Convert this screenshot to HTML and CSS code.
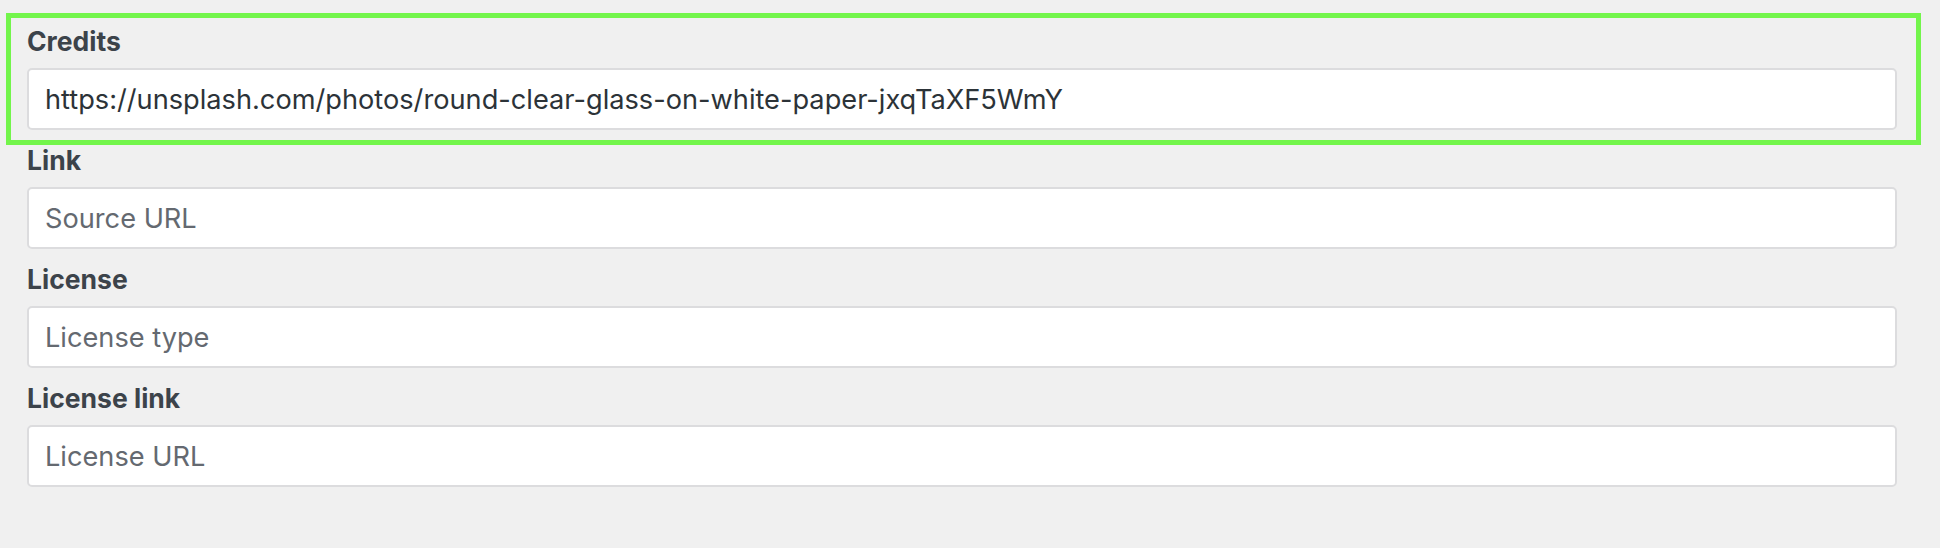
FILE: index.html
```html
<!DOCTYPE html>
<html lang="en">
<head>
<meta charset="utf-8">
<title>Credits</title>
<link rel="stylesheet" href="styles.css">
</head>
<body>
<div class="form">
  <div class="field field--active">
    <label class="field-label" for="credits">Credits</label>
    <input class="field-input" id="credits" type="text" value="https://unsplash.com/photos/round-clear-glass-on-white-paper-jxqTaXF5WmY">
  </div>
  <div class="field">
    <label class="field-label" for="link">Link</label>
    <input class="field-input" id="link" type="text" placeholder="Source URL">
  </div>
  <div class="field">
    <label class="field-label" for="license">License</label>
    <input class="field-input" id="license" type="text" placeholder="License type">
  </div>
  <div class="field">
    <label class="field-label" for="license-link">License link</label>
    <input class="field-input" id="license-link" type="text" placeholder="License URL">
  </div>
</div>
</body>
</html>
```
FILE: styles.css
```css
html, body {
  margin: 0;
  padding: 0;
  background: #f0f0f0;
}
body {
  font-family: Inter, "Noto Sans", sans-serif;
  height: 548px;
  overflow: hidden;
}
.form {
  padding: 26px 0 0 27px;
  width: 1870px;
  display: flex;
  flex-direction: column;
  gap: 15px;
}
.field {
  position: relative;
  display: flex;
  flex-direction: column;
  gap: 12px;
}
.field--active::after {
  content: "";
  position: absolute;
  top: -13px;
  left: -21px;
  right: -24px;
  bottom: -15px;
  border: 5px solid #73f54b;
  pointer-events: none;
}
.field-label {
  display: block;
  font-size: 26.5px;
  line-height: 30px;
  font-weight: 700;
  color: #3c434a;
}
.field-input {
  box-sizing: border-box;
  width: 100%;
  height: 62px;
  margin: 0;
  padding: 0 16px;
  border: 2px solid #dcdcde;
  border-radius: 5px;
  background: #fff;
  font-family: Inter, "Noto Sans", sans-serif;
  font-size: 27.2px;
  color: #2c3338;
  outline: none;
}
.field-input::placeholder {
  color: #646970;
  opacity: 1;
}
```
